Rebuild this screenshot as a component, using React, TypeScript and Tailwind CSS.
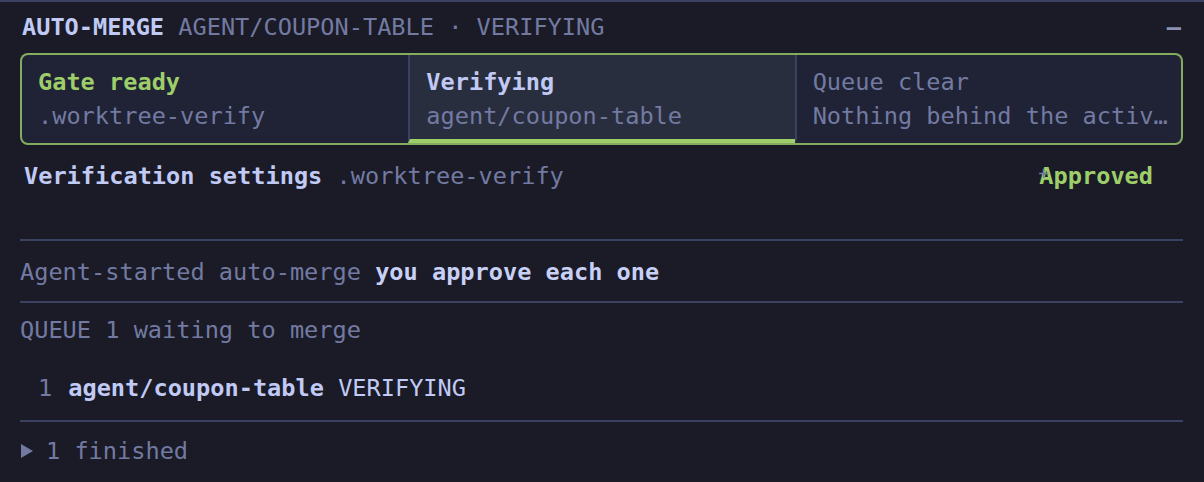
import React from "react";

const cells = [
  { title: "Gate ready", sub: ".worktree-verify", tone: "ready" },
  { title: "Verifying", sub: "agent/coupon-table", tone: "active" },
  { title: "Queue clear", sub: "Nothing behind the active merge", tone: "idle" },
];

export default function App() {
  return (
    <div className="h-[482px] w-[1204px] overflow-hidden border-t-2 border-[#3b4261] bg-[#1a1b26] font-['DejaVu_Sans_Mono',monospace] text-[23.6px] leading-[30px] text-[#737aa2]">
      <div className="pl-5 pr-[21px] pt-[10px]">
        {/* header */}
        <div className="flex items-center justify-between pl-[2px]">
          <div className="whitespace-nowrap">
            <span className="font-bold text-[#c0caf5]">AUTO-MERGE</span>{" "}
            <span>AGENT/COUPON-TABLE · VERIFYING</span>
          </div>
          <span className="pr-[2px] font-bold text-[#8c92b5]">–</span>
        </div>

        {/* status strip */}
        <div className="mt-[11px] grid grid-cols-3 overflow-hidden rounded-lg border-2 border-[#9ece6a]/80 bg-[#1f2335]">
          {cells.map((c, i) => (
            <div
              key={c.title}
              className={
                "min-w-0 border-b-4 pl-4 pr-3 pt-3 pb-2 " +
                (i > 0 ? "border-l-2 border-l-[#3b4261] " : "") +
                (c.tone === "active"
                  ? "border-b-[#9ece6a] bg-[#292e3e]"
                  : "border-b-transparent")
              }
            >
              <div
                className={
                  c.tone === "ready"
                    ? "font-bold text-[#9ece6a]"
                    : c.tone === "active"
                      ? "font-bold text-[#c0caf5]"
                      : "text-[#737aa2]"
                }
              >
                {c.title}
              </div>
              <div className="mt-1 truncate">{c.sub}</div>
            </div>
          ))}
        </div>

        {/* settings row */}
        <div className="relative flex items-center justify-between pl-1 pr-[30px] pt-4 pb-[48px]">
          <div className="whitespace-nowrap">
            <span className="font-bold text-[#c0caf5]">Verification settings</span>{" "}
            <span>.worktree-verify</span>
          </div>
          <span className="relative font-bold text-[#9ece6a]">
            Approved
            <span className="absolute left-[-1px] top-[-3px] text-[18px] font-normal text-[#737aa2]">+</span>
          </span>
        </div>

        <div className="border-t-2 border-[#3b4261] pt-4 pb-[14px]">
          Agent-started auto-merge{" "}
          <span className="font-bold text-[#c8d0f5]">you approve each one</span>
        </div>

        <div className="border-t-2 border-[#3b4261] pt-3">
          <div>QUEUE 1 waiting to merge</div>
          <div className="mt-7 flex gap-[16px] pl-[18px] pb-[17px]">
            <span>1</span>
            <span>
              <span className="font-bold text-[#c0caf5]">agent/coupon-table</span>{" "}
              <span className="text-[#c0caf5]">VERIFYING</span>
            </span>
          </div>
        </div>

        <div className="flex items-center gap-[12px] border-t-2 border-[#3b4261] pt-[14px]">
          <svg width="14" height="16" viewBox="0 0 14 16" className="shrink-0">
            <path d="M1 1 L13 8 L1 15 Z" fill="#737aa2" />
          </svg>
          <span>1 finished</span>
        </div>
      </div>
    </div>
  );
}
